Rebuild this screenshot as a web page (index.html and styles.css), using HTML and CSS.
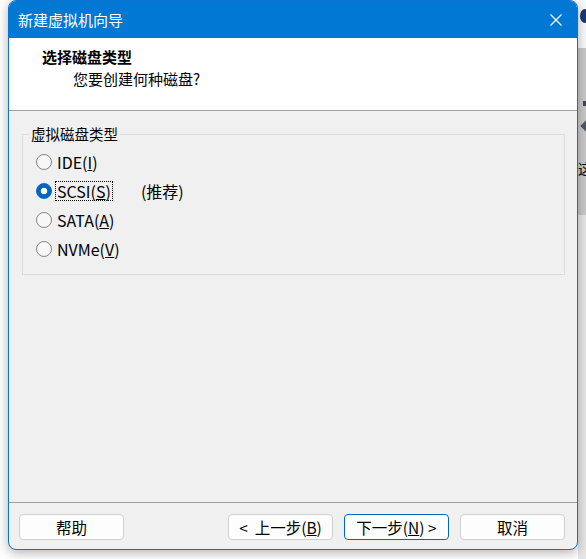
FILE: index.html
```html
<!DOCTYPE html>
<html>
<head lang="zh-CN">
    <meta charset="UTF-8">
    <title>新建虚拟机向导</title>
    <link rel="stylesheet" href="styles.css">
</head>
<body>
<div class="screen">
    <div class="dialog">
        <div class="titlebar">
            <span class="title">新建虚拟机向导</span>
            <svg class="close" width="12" height="12" viewBox="0 0 12 12">
                <path d="M0.5 0.5 L11.5 11.5 M11.5 0.5 L0.5 11.5" stroke="#fff" stroke-width="1.2" fill="none"/>
            </svg>
        </div>
        <div class="header">
            <div class="head-title">选择磁盘类型</div>
            <div class="head-sub">您要创建何种磁盘?</div>
        </div>
        <div class="content">
            <fieldset class="group">
                <legend>虚拟磁盘类型</legend>
                <div class="radios">
                    <div class="row"><span class="radio"></span><span class="label">IDE(<u>I</u>)</span></div>
                    <div class="row"><span class="radio on"></span><span class="label focus">SCSI(<u>S</u>)</span><span class="hint">(推荐)</span></div>
                    <div class="row"><span class="radio"></span><span class="label">SATA(<u>A</u>)</span></div>
                    <div class="row"><span class="radio"></span><span class="label">NVMe(<u>V</u>)</span></div>
                </div>
            </fieldset>
        </div>
        <div class="footer">
            <button class="btn">帮助</button>
            <div class="spacer"></div>
            <button class="btn">&lt;&nbsp; 上一步(<u>B</u>)</button>
            <button class="btn primary">下一步(<u>N</u>) &gt;</button>
            <button class="btn">取消</button>
        </div>
    </div>
    <div class="side">
        <div class="side-top"><span class="blob"></span></div>
        <div class="side-mid">
            <span class="mark"></span>
            <span class="diamond"></span>
            <span class="char">这</span>
        </div>
        <div class="side-low"></div>
    </div>
</div>
</body>
</html>
```

FILE: styles.css
```css
body{
    margin: 0;
    padding: 0;
    background: #fff;
    font-family: "Noto Sans CJK SC", "Microsoft YaHei", sans-serif;
    color: #000;
}
.screen{
    display: flex;
    height: 559px;
    overflow: hidden;
}
.dialog{
    margin-left: 8px;
    width: 570px;
    height: 550px;
    flex: none;
    box-sizing: border-box;
    border: 1px solid #0a74d0;
    border-radius: 8px;
    background: #f0f0f0;
    box-shadow: 0 3px 12px rgba(0, 0, 0, 0.3);
    display: flex;
    flex-direction: column;
    overflow: hidden;
    position: relative;
    z-index: 1;
}
.titlebar{
    height: 37px;
    flex: none;
    background: #0078d4;
    display: flex;
    align-items: center;
    padding: 0 15px 0 9px;
}
.title{
    color: #fff;
    font-size: 15px;
    flex: 1;
}
.header{
    height: 73px;
    flex: none;
    box-sizing: border-box;
    background: #fff;
    border-bottom: 1px solid #a0a0a0;
    padding: 8px 0 0 33px;
    font-size: 15px;
    line-height: 22px;
}
.head-title{
    font-weight: bold;
}
.head-sub{
    padding-left: 31px;
}
.content{
    flex: 1;
    padding-top: 13px;
}
.group{
    margin: 0 12px 0 13px;
    padding: 0;
    border: 1px solid #dcdcdc;
    min-width: 0;
}
.group legend{
    margin-left: 6px;
    padding: 0 2px;
    font-size: 14.5px;
    line-height: 20px;
}
.radios{
    padding: 3px 0 11px 13px;
}
.row{
    height: 29px;
    display: flex;
    align-items: center;
    font-size: 16px;
}
.radio{
    width: 16px;
    height: 16px;
    box-sizing: border-box;
    border: 1px solid #868686;
    border-radius: 50%;
    background: #f7f7f7;
    margin-right: 3px;
    flex: none;
}
.radio.on{
    border-color: #0067c0;
    background: radial-gradient(circle, #fff 0, #fff 3px, #0067c0 3.6px);
}
.label{
    line-height: 18px;
    padding: 0 1px;
    border: 1px dotted transparent;
}
.label.focus{
    border-color: #000;
}
.hint{
    margin-left: 28px;
}
.footer{
    height: 47px;
    flex: none;
    box-sizing: border-box;
    border-top: 1px solid #a0a0a0;
    padding: 11px 12px 0 10px;
    display: flex;
    align-items: flex-start;
    gap: 11px;
}
.spacer{
    flex: 1;
}
.btn{
    width: 105px;
    height: 26px;
    box-sizing: border-box;
    border: 1px solid #d0d0d0;
    border-radius: 4px;
    background: #fdfdfd;
    font-family: inherit;
    font-size: 15.5px;
    color: #000;
    padding: 0;
    line-height: 22px;
}
.btn.primary{
    border-color: #0067c0;
}
.side{
    flex: 1;
    display: flex;
    flex-direction: column;
}
.side-top{
    height: 48px;
    background: #fafafa;
    position: relative;
}
.blob{
    position: absolute;
    left: 2px;
    top: 9px;
    width: 10px;
    height: 14px;
    border-radius: 50%;
    background: #1f3a6e;
}
.side-mid{
    height: 167px;
    background: #c9c9c9;
    position: relative;
    font-size: 14px;
}
.mark{
    position: absolute;
    left: 5px;
    top: 53px;
    width: 5px;
    height: 5px;
    background: #3b4a5a;
}
.diamond{
    position: absolute;
    left: 4px;
    top: 74px;
    width: 8px;
    height: 8px;
    background: #4c5a68;
    transform: rotate(45deg);
}
.char{
    position: absolute;
    left: 0;
    top: 110px;
}
.side-low{
    flex: 1;
    background: #e6e6e6;
}
```
